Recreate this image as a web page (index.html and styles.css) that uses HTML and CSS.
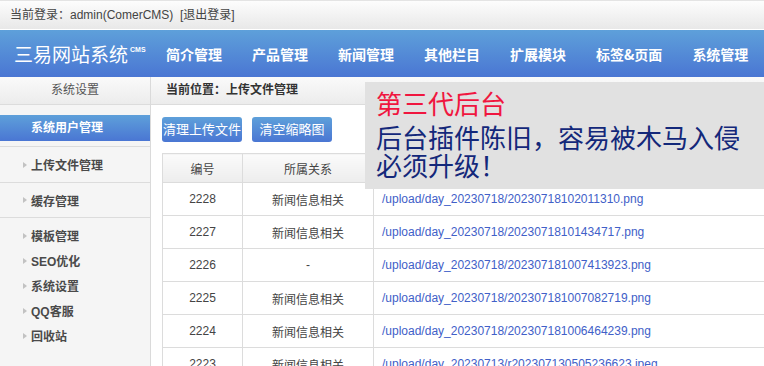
FILE: index.html
```html
<!DOCTYPE html>
<html lang="zh-CN">
<head>
<meta charset="utf-8">
<title>三易网站系统</title>
<link rel="stylesheet" href="styles.css">
</head>
<body>
<div class="topbar">当前登录：admin(ComerCMS)&nbsp; [退出登录]</div>
<div class="header">
  <div class="logo">三易网站系统<sup>CMS</sup></div>
  <ul class="nav">
    <li>简介管理</li>
    <li>产品管理</li>
    <li>新闻管理</li>
    <li>其他栏目</li>
    <li>扩展模块</li>
    <li>标签&amp;页面</li>
    <li>系统管理</li>
  </ul>
</div>
<div class="layout">
  <div class="sidebar">
    <div class="side-title">系统设置</div>
    <div class="side-active">系统用户管理</div>
    <div class="side-item"><span class="tri"></span>上传文件管理</div>
    <div class="side-item"><span class="tri"></span>缓存管理</div>
    <ul class="side-list">
      <li><span class="tri"></span>模板管理</li>
      <li><span class="tri"></span>SEO优化</li>
      <li><span class="tri"></span>系统设置</li>
      <li><span class="tri"></span>QQ客服</li>
      <li><span class="tri"></span>回收站</li>
    </ul>
  </div>
  <div class="main">
    <div class="crumb">当前位置：上传文件管理</div>
    <div class="content">
      <div class="btns">
        <span class="btn">清理上传文件</span>
        <span class="btn">清空缩略图</span>
      </div>
      <table class="grid">
        <thead>
          <tr><th class="c1">编号</th><th class="c2">所属关系</th><th class="c3"></th></tr>
        </thead>
        <tbody>
          <tr><td>2228</td><td>新闻信息相关</td><td class="path">/upload/day_20230718/20230718102011310.png</td></tr>
          <tr><td>2227</td><td>新闻信息相关</td><td class="path">/upload/day_20230718/20230718101434717.png</td></tr>
          <tr><td>2226</td><td>-</td><td class="path">/upload/day_20230718/202307181007413923.png</td></tr>
          <tr><td>2225</td><td>新闻信息相关</td><td class="path">/upload/day_20230718/202307181007082719.png</td></tr>
          <tr><td>2224</td><td>新闻信息相关</td><td class="path">/upload/day_20230718/202307181006464239.png</td></tr>
          <tr><td>2223</td><td>新闻信息相关</td><td class="path">/upload/day_20230713/r202307130505236623.jpeg</td></tr>
        </tbody>
      </table>
    </div>
  </div>
</div>
<div class="notice">
  <div class="n1">第三代后台</div>
  <div class="n2">后台插件陈旧，容易被木马入侵</div>
  <div class="n3">必须升级！</div>
</div>
</body>
</html>
```
FILE: styles.css
```css
* { box-sizing: border-box; }
html, body { margin: 0; padding: 0; }
body {
  font-family: "Liberation Sans", "Noto Sans CJK SC", sans-serif;
  font-size: 12px;
  color: #333;
  background: #fff;
  width: 764px;
  height: 366px;
  overflow: hidden;
  position: relative;
}
ul { margin: 0; padding: 0; list-style: none; }

.topbar {
  height: 30px;
  line-height: 28px;
  padding-left: 10px;
  border-top: 1px solid #e4e4e4;
  border-bottom: 1px solid #fff;
  background: linear-gradient(#fdfdfd, #e8e8e8);
  color: #444;
}

.header {
  height: 47px;
  display: flex;
  align-items: center;
  background: linear-gradient(#5ea0da, #4a76d3);
  color: #fff;
}
.logo {
  font-family: "Noto Sans CJK SC", sans-serif;
  font-size: 19px;
  padding-left: 14px;
  width: 166px;
  white-space: nowrap;
}
.logo sup {
  font-family: "Liberation Sans", sans-serif;
  font-size: 7px;
  font-weight: bold;
  vertical-align: 10px;
  margin-left: 2px;
}
.nav { display: flex; gap: 30px; }
.nav li {
  font-family: "Noto Sans CJK SC", sans-serif;
  font-size: 14px;
  font-weight: bold;
  white-space: nowrap;
}

.layout { display: flex; height: 289px; }
.sidebar {
  width: 151px;
  flex: none;
  background: #f5f5f5;
  border-right: 1px solid #dadada;
}
.side-title {
  height: 28px;
  line-height: 27px;
  text-align: center;
  color: #555;
  font-size: 12px;
  background: linear-gradient(#fafafa, #ececec);
  border-bottom: 1px solid #dcdcdc;
}
.side-active {
  margin: 10px 0 5px;
  height: 26px;
  line-height: 26px;
  padding-left: 31px;
  color: #fff;
  font-weight: bold;
  font-size: 12px;
  background: linear-gradient(#5ea0da, #4a76d3);
}
.side-item {
  height: 36px;
  padding-left: 23px;
  border-top: 1px solid #dcdcdc;
  font-size: 12px;
  font-weight: bold;
  color: #4a4a4a;
  display: flex;
  align-items: center;
}
.side-item:last-of-type { border-bottom: 1px solid #dcdcdc; }
.tri {
  display: inline-block;
  width: 0;
  height: 0;
  border-left: 4px solid #c2c2c2;
  border-top: 3px solid transparent;
  border-bottom: 3px solid transparent;
  margin-right: 4px;
}
.side-list { padding-top: 5px; }
.side-list li {
  height: 25px;
  padding-left: 23px;
  font-size: 12px;
  font-weight: bold;
  color: #4a4a4a;
  display: flex;
  align-items: center;
}

.main { flex: 1; min-width: 0; }
.crumb {
  height: 28px;
  line-height: 27px;
  padding-left: 15px;
  font-weight: bold;
  color: #333;
  background: linear-gradient(#fafafa, #ececec);
  border-bottom: 1px solid #dcdcdc;
}
.content { padding: 12px 0 0 11px; }
.btns { display: flex; gap: 10px; }
.btn {
  width: 80px;
  height: 25px;
  line-height: 25px;
  text-align: center;
  color: #fff;
  font-size: 13px;
  border-radius: 3px;
  background: linear-gradient(#5ea0da, #4a76d3);
}
.grid {
  margin-top: 11px;
  border-collapse: collapse;
  width: 640px;
  table-layout: fixed;
}
.grid th {
  height: 29px;
  font-weight: normal;
  color: #444;
  background: linear-gradient(#fbfbfb, #ededed);
  border: 1px solid #dcdcdc;
}
.c1 { width: 80px; }
.c2 { width: 131px; }
.grid td {
  height: 33px;
  text-align: center;
  color: #444;
  border: 1px solid #dcdcdc;
  white-space: nowrap;
}
.grid td.path {
  text-align: left;
  padding-left: 8px;
  color: #4160c8;
}

.notice {
  position: absolute;
  left: 365px;
  top: 82px;
  width: 399px;
  height: 107px;
  background: #e1e1e1;
  padding: 7px 0 0 11px;
  font-family: "Noto Sans CJK SC", sans-serif;
  font-size: 26px;
  color: #13287a;
}
.n1 { color: #f0163f; line-height: 28px; margin-bottom: 5px; }
.n2 { line-height: 29px; }
.n3 { line-height: 28px; }
```
